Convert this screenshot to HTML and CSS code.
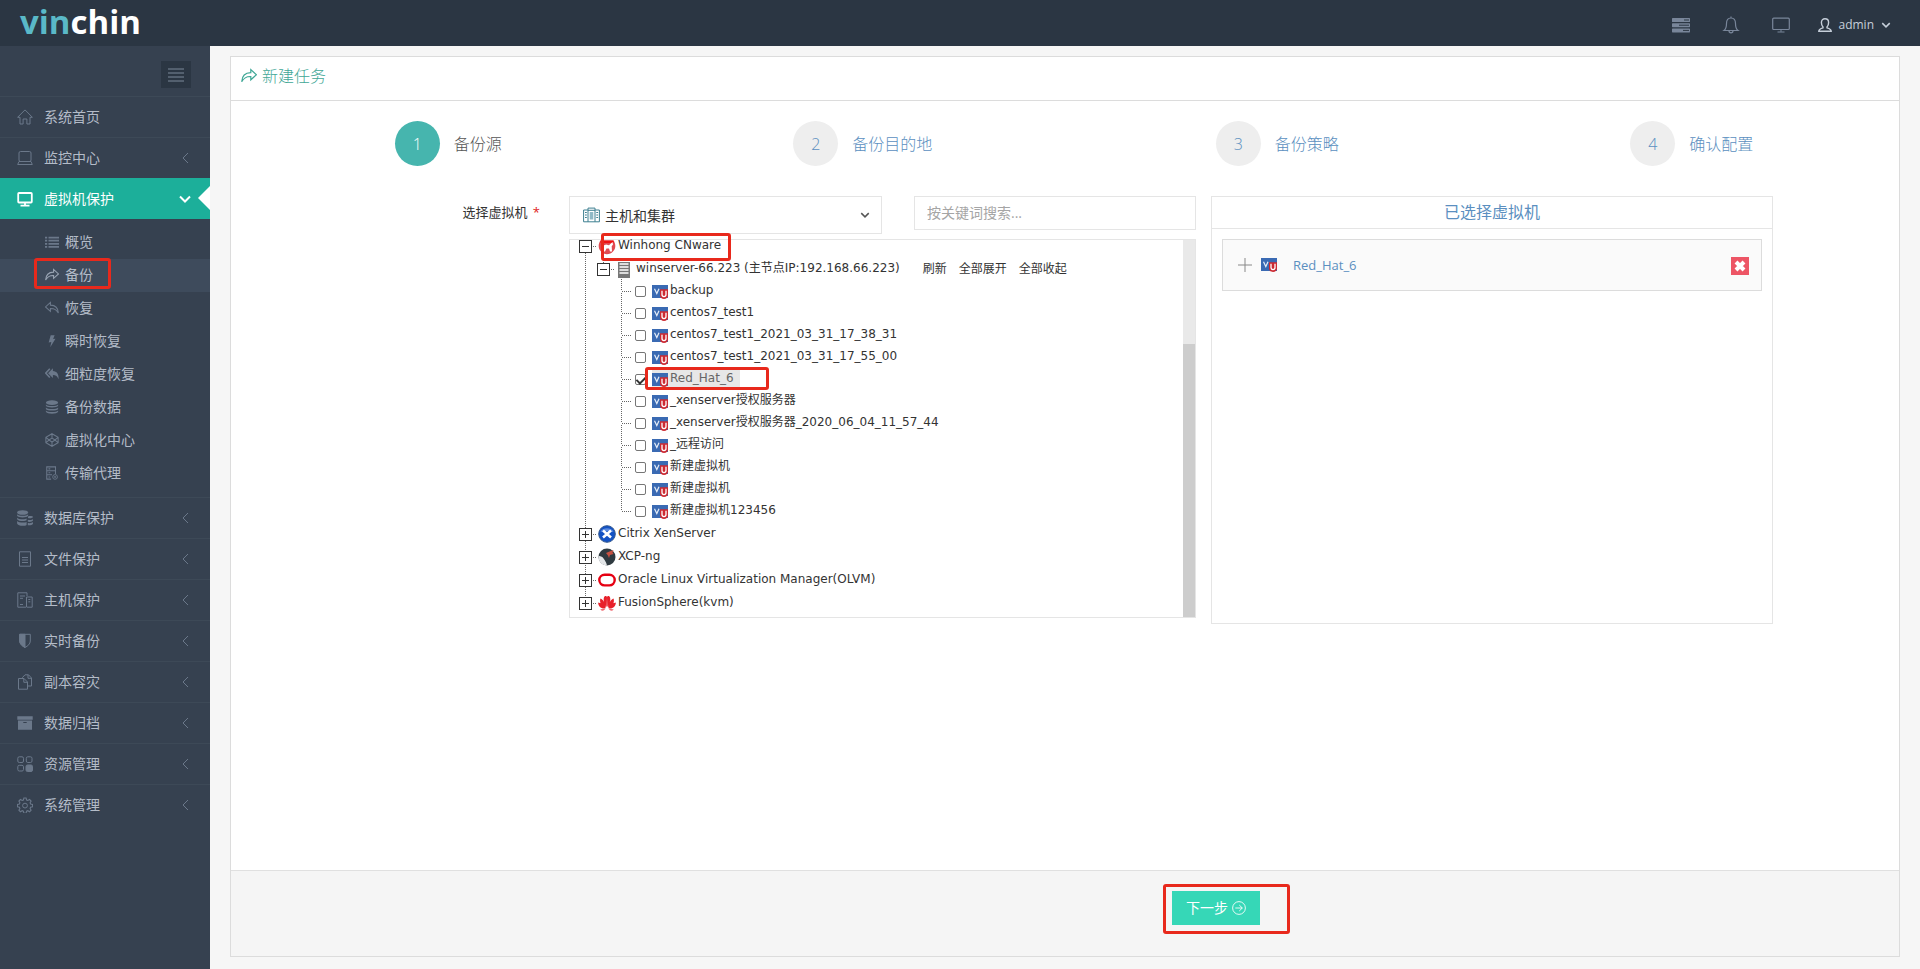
FILE: index.html
```html
<!DOCTYPE html>
<html lang="zh-CN">
<head>
<meta charset="utf-8">
<meta name="viewport" content="width=device-width, initial-scale=1">
<title>vinchin - 新建任务</title>
<link rel="stylesheet" href="styles.css">
</head>
<body>
<svg class="sprite" aria-hidden="true">
  <symbol id="i-home" viewBox="0 0 16 16"><path d="M.6 8.3 8 .9l7.4 7.4H13V15H9.900V10H6.100V15H3V8.300Z"/></symbol>
  <symbol id="i-laptop" viewBox="0 0 16 16"><rect x="2" y="1.500" width="12" height="10" rx="1.500"/><path d="M.7 14.500 2 11.500h12l1.300 3Z"/></symbol>
  <symbol id="i-desktop" viewBox="0 0 16 16"><rect x="1.200" y="2" width="13.600" height="9.500" rx=".8" stroke-width="1.800"/><path d="M8 12v2M3.500 14.600h9" stroke-width="1.800"/></symbol>
  <symbol id="i-left" viewBox="0 0 16 16"><path d="M11 3 6 8l5 5"/></symbol>
  <symbol id="i-down" viewBox="0 0 16 16"><path d="m3 5.500 5 5 5-5"/></symbol>
  <symbol id="i-list" viewBox="0 0 16 16"><path d="M0 3h2.500M4 3h12M0 6.500h2.500M4 6.500h12M0 10h2.500M4 10h12M0 13.500h2.500M4 13.500h12" stroke-width="2"/></symbol>
  <symbol id="i-share" viewBox="0 0 16 16"><path d="M.7 13.800C1 8 4 4.800 9.800 4.700V1.600l5.600 5.200-5.600 5V8.500C5.500 8.300 2.800 9.800.7 13.800Z" stroke-width="1.200"/></symbol>
  <symbol id="i-bolt" viewBox="0 0 16 16"><path d="M6.500 1.500H11L9.300 5.800 12 5.300 6 15l1.200-6-3 .8Z" fill="currentColor" stroke="none"/></symbol>
  <symbol id="i-replyall" viewBox="0 0 16 16"><path d="M9 1.500v3c4.500.2 7 3.500 6.500 9.500C14.300 10.800 12.500 9.300 9 9.200v3.300L3.500 7Z" fill="currentColor" stroke="none"/><path d="M5.500 2 .8 7l4.700 5" stroke-width="1.800"/></symbol>
  <symbol id="i-db" viewBox="0 0 16 16"><g fill="currentColor" stroke="none"><ellipse cx="8" cy="3" rx="7" ry="2.600"/><path d="M1 5c1.500 2.300 12.500 2.300 14 0v1.700c-1 2.400-13 2.400-14 0ZM1 8.500c1.500 2.300 12.500 2.300 14 0v1.700c-1 2.400-13 2.400-14 0ZM1 12c1.500 2.300 12.500 2.300 14 0v1.500c-1 2.900-13 2.900-14 0Z"/></g></symbol>
  <symbol id="i-hex" viewBox="0 0 16 16"><path d="M8 .8 15 5v6l-7 4.200L1 11V5ZM8 .8v5M8 10.300v4.900M1 5l3.800 3L1 11M15 5l-3.800 3L15 11M4.500 8 8 5.800 11.500 8 8 10.300Z" stroke-width="1.200"/></symbol>
  <symbol id="i-agent" viewBox="0 0 16 16"><path d="M7 15H2V1h10v8M2 5.500h10M2 10h6M4 3.300h2M4 7.800h2M4 12.500h2" stroke-width="1.200"/><circle cx="11.500" cy="12.500" r="2.700"/><circle cx="11.500" cy="12.500" r=".7"/></symbol>
  <symbol id="i-dbs" viewBox="0 0 16 16"><g fill="currentColor" stroke="none"><ellipse cx="5.600" cy="2.500" rx="5.500" ry="2.300"/><path d="M.1 4.300c1.500 2 9.500 2 11 0v1.500c-1 2.300-10 2.300-11 0ZM.1 7.700c1.500 1.900 8 2 9.500.9V10.300C8 11.500 1.200 11.300.1 9.200ZM.1 11c1.500 1.900 8 2 9.500.9v3C7 16.400.9 16 .1 13.500Z"/><path d="M11 6.500c2-.8 5-.3 5 .6s-3 1.600-5 1ZM10.800 9.700c2 .6 4.500.2 5.200-.7v1.600c-.7 1.200-3 1.500-5.200 1.200ZM10.800 13c2 .4 4.500 0 5.200-.9v1.600c-.7 1.500-3 1.800-5.200 1.600Z"/></g></symbol>
  <symbol id="i-file" viewBox="0 0 16 16"><path d="M2.500.8h11v14.400h-11ZM5 6.500h6M5 9h6M5 11.500h6"/></symbol>
  <symbol id="i-host" viewBox="0 0 16 16"><path d="M9 15.200H.8V.8H10V4M10 15.200h5.200V5H9.500v10.200M3 4h5M3 6.300h3M3 12.500h3M11.300 7.500h2M11.300 9.800h2"/></symbol>
  <symbol id="i-shield" viewBox="0 0 16 16"><path d="M2.700 1.300h10.600V8c0 3-2.500 5-5.300 6.500C5.200 13 2.700 11 2.700 8Z"/><path d="M2.700 1.300H8v13.200C5.200 13 2.700 11 2.700 8Z" fill="currentColor"/></symbol>
  <symbol id="i-copy" viewBox="0 0 16 16"><path d="M5.500 5V3.500L8 .8h3.500L14.500 4v8h-4M11 .8V4.300h3.500M1.500 15.200V4.500H7l3.500 3.500v7.200ZM6.800 4.500V8.300h3.700"/></symbol>
  <symbol id="i-archive" viewBox="0 0 16 16"><path d="M.3 1.200h15.400v3.600H.3ZM1 5.500h14v9.200H1Z" fill="currentColor" stroke="none"/><path d="M6.300 7.500h3.400" stroke="#364150"/></symbol>
  <symbol id="i-grid" viewBox="0 0 16 16"><rect x=".8" y=".8" width="5.700" height="5.700" rx="1.500"/><rect x="9.300" y=".8" width="5.700" height="5.700" rx="1.500"/><rect x=".8" y="9.300" width="5.700" height="5.700" rx="1.500"/><rect x="9" y="9" width="6.500" height="6.500" rx="1.500" fill="currentColor"/></symbol>
  <symbol id="i-gear" viewBox="0 0 16 16"><path d="M6.900 1h2.200l.5 2 1.200.5 1.800-1 1.500 1.500-1 1.800.5 1.200 2 .5v2.200l-2 .5-.5 1.200 1 1.800-1.500 1.500-1.800-1-1.200.5-.5 2H6.900l-.5-2-1.200-.5-1.800 1-1.500-1.500 1-1.800-.5-1.200-2-.5V7.500l2-.5.500-1.200-1-1.800 1.500-1.500 1.800 1 1.200-.5Z" stroke-width="1.100"/><circle cx="8" cy="8.600" r="2.400"/></symbol>
  <symbol id="i-servers" viewBox="0 0 18 16"><g fill="currentColor" stroke="none"><rect y="1" width="18" height="4" rx=".6"/><rect y="6.200" width="18" height="4" rx=".6"/><rect y="11.400" width="18" height="4" rx=".6"/></g><path d="M12 3h5M7 8.200h10M11 13.400h6" stroke="#2b3643"/></symbol>
  <symbol id="i-bell" viewBox="0 0 16 18"><path d="M1 14.500c2-1.500 2.500-3.500 2.500-7C3.500 4 5.500 2 8 2s4.500 2 4.500 5.500c0 3.500.5 5.500 2.500 7ZM8 2V.5M6 14.800c0 2.700 4 2.700 4 0" stroke-width="1.200"/></symbol>
  <symbol id="i-screen" viewBox="0 0 18 16"><rect x=".7" y="1.200" width="16.600" height="11.300" rx="1" stroke-width="1.200"/><path d="M9 12.500v2.300M5.500 15h7"/></symbol>
  <symbol id="i-user" viewBox="0 0 14 14"><path d="M.8 13.200c0-2 1.700-2.700 4.200-3.400V8.900C3.800 7.800 3.400 6.500 3.400 4.500 3.400 2 5 .8 7 .8s3.600 1.200 3.600 3.700c0 2-.4 3.300-1.600 4.400v.9c2.500.7 4.200 1.400 4.200 3.400Z" stroke-width="1.400"/></symbol>
  <symbol id="i-bars" viewBox="0 0 16 14"><path d="M0 1h16M0 5h16M0 9h16M0 13h16"/></symbol>
  <symbol id="i-city" viewBox="0 0 17 15"><path d="M5 14.300H.6V2.500H5M12 2.500h4.400v11.800H12M5 14.300V.6h7v13.700ZM5 2.800h7M2 5h1.800M2 7.500h1.800M2 10h1.800M13.300 5h1.800M13.300 7.500h1.800M13.300 10h1.800"/><rect x="6.700" y="4.500" width="3.600" height="7.500" fill="#8fb9c6" stroke="none"/></symbol>
  <symbol id="i-go" viewBox="0 0 16 16"><circle cx="8" cy="8" r="7.300"/><path d="M3.800 8h8M8.300 4.600 11.800 8l-3.500 3.400"/></symbol>
  <symbol id="i-x" viewBox="0 0 16 16"><path d="m4 4 8 8M12 4l-8 8" stroke-width="4"/></symbol>
  <symbol id="i-plus" viewBox="0 0 14 14"><path d="M7 0v14M0 7h14"/></symbol>
  <symbol id="i-vm" viewBox="0 0 16 14"><rect width="16" height="13" fill="#3a6ab3" stroke="none"/><path d="m2.500 3.800 2.300 4.700 2.200-4.700" stroke="#e4ecf7" stroke-width="1.200"/><path d="M8 4.200h8v6.300c0 2-1.800 3.500-4 3.500s-4-1.500-4-3.500Z" fill="#cc2a32" stroke="none"/><path d="M10 5.800v3.700c0 2.800 4 2.800 4 0V5.800" stroke="#fff" stroke-width="1.300"/></symbol>
  <symbol id="i-rack" viewBox="0 0 12 16"><rect x="0" y="0" width="12" height="16" fill="#777" stroke="none"/><path d="M1.500 2h9M1.500 5h9M1.500 8h9M1.500 11h9" stroke="#fff" stroke-width="1.600"/></symbol>
  <symbol id="i-winhong" viewBox="0 0 18 18"><path d="M2.500 3.500h13c2.500 3.500 2.500 8-.5 11-3 3.700-9 3.700-12 0-3-3-3-7.500-.5-11Z" fill="#e04a50" stroke="none"/><path d="M2.500 3.500h13V6h-13Z" fill="#ee1111" stroke="none"/><path d="m3.500 6.500 3 1.700L8 7.500l3 .8L14.500 5l.5 2.500-1.300 1.800.3 5.200h-2l-1-3H8.500l-1.500 3H5l.8-4.700Z" fill="#fff" stroke="none"/></symbol>
  <symbol id="i-citrix" viewBox="0 0 18 18"><circle cx="9" cy="9" r="8.300" fill="#1352c4" stroke="#33588f"/><path d="M2.500 7C4 2 14 2 15.500 7 12 5.500 6 5.500 2.500 7Z" fill="#5c8be0" stroke="none"/><path d="m5 5.500 8 7M13 5.500l-8 7" stroke="#fff" stroke-width="2.600"/></symbol>
  <symbol id="i-xcp" viewBox="0 0 18 18"><circle cx="9" cy="9" r="8.500" fill="#2f3a40" stroke="none"/><path d="M.6 8c3-.5 5 2 6 4 1 1.500 2 3.500 2.400 5.500C4 17.500 0 13.500.6 8Z" fill="#e3e6e8" stroke="none"/><path d="m8 5 3.500-1.500 4-1.500-1 2.500 1 1.500-3.500 1-1 3-1-2.500Z" fill="#c65142" stroke="none"/></symbol>
  <symbol id="i-oracle" viewBox="0 0 18 18"><rect x="1.300" y="3.800" width="15.400" height="10.600" rx="5.300" stroke="#e60012" stroke-width="2.400"/></symbol>
  <symbol id="i-huawei" viewBox="0 0 18 18"><g fill="#e8202a" stroke="none"><path d="M8.700 13C5.500 9 5 4 6.500 2.500c1.500-1 2.500 0 2.500 1ZM9.300 13c3.200-4 3.700-9 2.200-10.500-1.500-1-2.500 0-2.500 1ZM8 13.600C3.500 12.500 1 8 2.500 4.500c2.500 1 5 4.500 5.500 9.100ZM10 13.600c4.500-1.100 7-5.600 5.500-9.100-2.500 1-5 4.500-5.500 9.100ZM7.500 14.500C3 15.200 0 12 .2 8.500c3.300.3 5.800 3 7.300 6ZM10.500 14.500c4.500.7 7.500-2.500 7.300-6-3.300.3-5.800 3-7.300 6ZM7.300 15.200c-2 1.600-4 1.500-5 .2ZM10.700 15.200c2 1.600 4 1.500 5 .2Z"/></g></symbol>
</svg>

<header class="topbar">
  <a class="logo" href="#" aria-label="vinchin"><span class="logo-accent">vin</span>chin</a>
  <nav class="tools" aria-label="工具">
    <button class="tool" type="button" aria-label="任务"><svg class="icon icon-18"><use href="#i-servers"/></svg></button>
    <button class="tool" type="button" aria-label="通知"><svg class="icon icon-18"><use href="#i-bell"/></svg></button>
    <button class="tool" type="button" aria-label="屏幕"><svg class="icon icon-18"><use href="#i-screen"/></svg></button>
    <button class="user" type="button"><svg class="icon icon-14"><use href="#i-user"/></svg><span>admin</span><svg class="icon icon-caret"><use href="#i-down"/></svg></button>
  </nav>
</header>

<div class="shell">
  <aside class="sidebar">
    <div class="toggle-row"><button class="toggle" type="button" aria-label="折叠菜单"><svg class="icon icon-16"><use href="#i-bars"/></svg></button></div>
    <nav aria-label="主菜单">
      <ul class="menu">
        <li><a class="menu-link" href="#"><svg class="icon icon-16"><use href="#i-home"/></svg><span>系统首页</span></a></li>
        <li><a class="menu-link" href="#"><svg class="icon icon-16"><use href="#i-laptop"/></svg><span>监控中心</span><svg class="icon chevron"><use href="#i-left"/></svg></a></li>
        <li>
          <a class="menu-link active" href="#"><svg class="icon icon-16"><use href="#i-desktop"/></svg><span>虚拟机保护</span><svg class="icon chevron"><use href="#i-down"/></svg></a>
          <ul class="submenu">
            <li><a class="sub-link" href="#"><svg class="icon icon-14"><use href="#i-list"/></svg>概览</a></li>
            <li><a class="sub-link current" href="#"><svg class="icon icon-14"><use href="#i-share"/></svg>备份<i class="mark mark-menu"></i></a></li>
            <li><a class="sub-link" href="#"><svg class="icon icon-14 flip"><use href="#i-share"/></svg>恢复</a></li>
            <li><a class="sub-link" href="#"><svg class="icon icon-14"><use href="#i-bolt"/></svg>瞬时恢复</a></li>
            <li><a class="sub-link" href="#"><svg class="icon icon-14"><use href="#i-replyall"/></svg>细粒度恢复</a></li>
            <li><a class="sub-link" href="#"><svg class="icon icon-14"><use href="#i-db"/></svg>备份数据</a></li>
            <li><a class="sub-link" href="#"><svg class="icon icon-14"><use href="#i-hex"/></svg>虚拟化中心</a></li>
            <li><a class="sub-link" href="#"><svg class="icon icon-14"><use href="#i-agent"/></svg>传输代理</a></li>
          </ul>
        </li>
        <li><a class="menu-link" href="#"><svg class="icon icon-16"><use href="#i-dbs"/></svg><span>数据库保护</span><svg class="icon chevron"><use href="#i-left"/></svg></a></li>
        <li><a class="menu-link" href="#"><svg class="icon icon-16"><use href="#i-file"/></svg><span>文件保护</span><svg class="icon chevron"><use href="#i-left"/></svg></a></li>
        <li><a class="menu-link" href="#"><svg class="icon icon-16"><use href="#i-host"/></svg><span>主机保护</span><svg class="icon chevron"><use href="#i-left"/></svg></a></li>
        <li><a class="menu-link" href="#"><svg class="icon icon-16"><use href="#i-shield"/></svg><span>实时备份</span><svg class="icon chevron"><use href="#i-left"/></svg></a></li>
        <li><a class="menu-link" href="#"><svg class="icon icon-16"><use href="#i-copy"/></svg><span>副本容灾</span><svg class="icon chevron"><use href="#i-left"/></svg></a></li>
        <li><a class="menu-link" href="#"><svg class="icon icon-16"><use href="#i-archive"/></svg><span>数据归档</span><svg class="icon chevron"><use href="#i-left"/></svg></a></li>
        <li><a class="menu-link" href="#"><svg class="icon icon-16"><use href="#i-grid"/></svg><span>资源管理</span><svg class="icon chevron"><use href="#i-left"/></svg></a></li>
        <li><a class="menu-link" href="#"><svg class="icon icon-16"><use href="#i-gear"/></svg><span>系统管理</span><svg class="icon chevron"><use href="#i-left"/></svg></a></li>
      </ul>
    </nav>
  </aside>

  <main class="main">
    <form class="panel">
      <h1 class="panel-title"><svg class="icon icon-16"><use href="#i-share"/></svg>新建任务</h1>
      <div class="panel-body">
        <ol class="steps">
          <li class="step current"><span class="num">1</span>备份源</li>
          <li class="step"><span class="num">2</span>备份目的地</li>
          <li class="step"><span class="num">3</span>备份策略</li>
          <li class="step"><span class="num">4</span>确认配置</li>
        </ol>
        <div class="source">
          <label class="field-label" for="view">选择虚拟机 <span class="required">*</span></label>
          <div class="picker">
            <div class="filters">
              <div class="select-box">
                <svg class="icon icon-city"><use href="#i-city"/></svg>
                <select id="view"><option>主机和集群</option></select>
                <svg class="icon icon-caret"><use href="#i-down"/></svg>
              </div>
              <input class="search" type="text" placeholder="按关键词搜索..." aria-label="按关键词搜索">
            </div>
            <div class="tree-frame">
              <div class="tree-view">
                <ul class="tree">
                  <li>
                    <div class="row root"><button class="twig open" type="button" aria-label="收起"></button><i class="dots"></i><svg class="icon icon-18"><use href="#i-winhong"/></svg><span>Winhong CNware</span></div>
                    <ul class="hosts">
                      <li>
                        <div class="row host"><button class="twig open" type="button" aria-label="收起"></button><i class="dots"></i><svg class="icon icon-rack"><use href="#i-rack"/></svg><span>winserver-66.223 (主节点IP:192.168.66.223)</span><span class="actions"><a href="#">刷新</a><a href="#">全部展开</a><a href="#">全部收起</a></span></div>
                        <ul class="vms">
                          <li class="row vm"><i class="dots"></i><input type="checkbox" id="vm1"><label for="vm1"><svg class="icon icon-vm"><use href="#i-vm"/></svg>backup</label></li>
                          <li class="row vm"><i class="dots"></i><input type="checkbox" id="vm2"><label for="vm2"><svg class="icon icon-vm"><use href="#i-vm"/></svg>centos7_test1</label></li>
                          <li class="row vm"><i class="dots"></i><input type="checkbox" id="vm3"><label for="vm3"><svg class="icon icon-vm"><use href="#i-vm"/></svg>centos7_test1_2021_03_31_17_38_31</label></li>
                          <li class="row vm"><i class="dots"></i><input type="checkbox" id="vm4"><label for="vm4"><svg class="icon icon-vm"><use href="#i-vm"/></svg>centos7_test1_2021_03_31_17_55_00</label></li>
                          <li class="row vm"><i class="dots"></i><input type="checkbox" id="vm5" checked><label class="picked" for="vm5"><svg class="icon icon-vm"><use href="#i-vm"/></svg>Red_Hat_6</label><i class="mark mark-vm"></i></li>
                          <li class="row vm"><i class="dots"></i><input type="checkbox" id="vm6"><label for="vm6"><svg class="icon icon-vm"><use href="#i-vm"/></svg>_xenserver授权服务器</label></li>
                          <li class="row vm"><i class="dots"></i><input type="checkbox" id="vm7"><label for="vm7"><svg class="icon icon-vm"><use href="#i-vm"/></svg>_xenserver授权服务器_2020_06_04_11_57_44</label></li>
                          <li class="row vm"><i class="dots"></i><input type="checkbox" id="vm8"><label for="vm8"><svg class="icon icon-vm"><use href="#i-vm"/></svg>_远程访问</label></li>
                          <li class="row vm"><i class="dots"></i><input type="checkbox" id="vm9"><label for="vm9"><svg class="icon icon-vm"><use href="#i-vm"/></svg>新建虚拟机</label></li>
                          <li class="row vm"><i class="dots"></i><input type="checkbox" id="vm10"><label for="vm10"><svg class="icon icon-vm"><use href="#i-vm"/></svg>新建虚拟机</label></li>
                          <li class="row vm"><i class="dots"></i><input type="checkbox" id="vm11"><label for="vm11"><svg class="icon icon-vm"><use href="#i-vm"/></svg>新建虚拟机123456</label></li>
                        </ul>
                      </li>
                    </ul>
                  </li>
                  <li class="row root"><button class="twig" type="button" aria-label="展开"></button><i class="dots"></i><svg class="icon icon-18"><use href="#i-citrix"/></svg><span>Citrix XenServer</span></li>
                  <li class="row root"><button class="twig" type="button" aria-label="展开"></button><i class="dots"></i><svg class="icon icon-18"><use href="#i-xcp"/></svg><span>XCP-ng</span></li>
                  <li class="row root"><button class="twig" type="button" aria-label="展开"></button><i class="dots"></i><svg class="icon icon-18"><use href="#i-oracle"/></svg><span>Oracle Linux Virtualization Manager(OLVM)</span></li>
                  <li class="row root"><button class="twig" type="button" aria-label="展开"></button><i class="dots"></i><svg class="icon icon-18"><use href="#i-huawei"/></svg><span>FusionSphere(kvm)</span></li>
                </ul>
                <div class="scrollbar"><div class="thumb"></div></div>
              </div>
              <i class="mark mark-root"></i>
            </div>
          </div>
          <section class="selected">
            <h2 class="selected-title">已选择虚拟机</h2>
            <div class="selected-item">
              <svg class="icon icon-14 plus"><use href="#i-plus"/></svg>
              <svg class="icon icon-vm"><use href="#i-vm"/></svg>
              <a class="selected-name" href="#">Red_Hat_6</a>
              <button class="remove" type="button" aria-label="移除"><svg class="icon icon-16"><use href="#i-x"/></svg></button>
            </div>
          </section>
        </div>
      </div>
      <footer class="panel-footer">
        <div class="next-wrap"><button class="next" type="button">下一步<svg class="icon icon-14"><use href="#i-go"/></svg></button><i class="mark mark-next"></i></div>
      </footer>
    </form>
  </main>
</div>
</body>
</html>
```

FILE: styles.css
```css
* { box-sizing: border-box; }

body {
  margin: 0;
  min-height: 100vh;
  display: flex;
  flex-direction: column;
  background: #f6f6f6;
  color: #333;
  font: 14px/20px "Open Sans", "Noto Sans CJK SC", sans-serif;
}

ul, ol { margin: 0; padding: 0; list-style: none; }
a { color: inherit; text-decoration: none; }
button, input, select { font: inherit; color: inherit; }
button { padding: 0; border: 0; background: none; cursor: pointer; }

.sprite { position: absolute; width: 0; height: 0; }
.icon { flex: none; fill: none; stroke: currentColor; stroke-width: 1; }
.icon-14 { width: 14px; height: 14px; }
.icon-16 { width: 16px; height: 16px; }
.icon-18 { width: 18px; height: 18px; }
.icon-caret { width: 12px; height: 12px; stroke-width: 2; }
.icon-city { width: 17px; height: 16px; color: #3d7f90; }
.icon-rack { width: 12px; height: 16px; }
.icon-vm { width: 16px; height: 14px; }
.flip { transform: scaleX(-1); }

/* Top bar */
.topbar {
  height: 46px;
  display: flex;
  justify-content: space-between;
  align-items: center;
  padding: 0 28px 0 20px;
  background: #2b3643;
}
.logo { color: #fff; font-size: 33px; font-weight: 700; line-height: 40px; padding-bottom: 2px; }
.logo-accent { color: #5ab9c8; }
.tools { display: flex; align-items: center; padding-top: 3px; }
.tool { width: 50px; height: 30px; display: flex; justify-content: center; align-items: center; color: #79869a; }
.user { display: flex; align-items: center; gap: 6px; margin-left: 12px; color: #c6cfda; font-size: 12px; }

/* Sidebar */
.shell { flex: 1; display: flex; }
.sidebar { flex: none; width: 210px; background: #364150; color: #b4bcc8; }
.toggle-row { height: 50px; display: flex; justify-content: flex-end; align-items: center; padding: 7px 19px 0 0; }
.toggle { width: 30px; height: 27px; display: flex; justify-content: center; align-items: center; background: #2b3643; color: #7c899b; }
.menu-link {
  height: 41px;
  display: flex;
  align-items: center;
  gap: 11px;
  padding: 0 17px 1px;
  border-top: 1px solid #3d4957;
}
.menu-link .icon { color: #6b788a; }
.menu-link .chevron { width: 16px; height: 16px; margin-left: auto; }
.menu-link.active { position: relative; background: #1caf9a; border-color: #1caf9a; color: #fff; }
.menu-link.active .icon { color: #fff; }
.menu-link.active .chevron { stroke-width: 2; }
.menu-link.active::after {
  content: "";
  position: absolute;
  right: 0;
  top: 7px;
  border: 12px solid transparent;
  border-left-width: 0;
  border-right-color: #fff;
}
.submenu { padding: 7px 0; }
.sub-link { position: relative; height: 33px; display: flex; align-items: center; gap: 6px; padding: 0 0 2px 45px; }
.sub-link .icon { color: #6b788a; }
.sub-link.current { background: #3e4b5c; }
.sub-link.current .icon { color: #98a4b3; }

/* Highlight frames */
.mark { position: absolute; border: 3px solid #e8291c; border-radius: 3px; pointer-events: none; }
.mark-menu { left: 34px; top: -1px; width: 77px; height: 31px; }
.mark-root { left: 31px; top: -7px; width: 130px; height: 28px; }
.mark-vm { left: 24px; top: 0; width: 124px; height: 23px; }
.mark-next { left: -9px; top: -7px; width: 127px; height: 50px; }

/* Task panel */
.main { flex: 1; display: flex; padding: 10px 20px 12px; }
.panel { flex: 1; display: flex; flex-direction: column; background: #fff; border: 1px solid #dcdcdc; }
.panel-title {
  height: 44px;
  margin: 0;
  padding: 0 10px 6px;
  display: flex;
  align-items: center;
  gap: 5px;
  border-bottom: 1px solid #dcdcdc;
  color: #3fa796;
  font-size: 16px;
  font-weight: 300;
}
.panel-body { flex: 1; padding: 20px 0 30px; }

.steps { display: grid; grid-template-columns: repeat(4, 1fr); padding-left: 10px; font-size: 16px; font-weight: 300; }
.step { display: flex; justify-content: center; align-items: center; gap: 14px; color: #5b8fc0; }
.num { width: 45px; height: 45px; border-radius: 50%; display: flex; justify-content: center; align-items: center; background: #eee; }
.step.current { color: #555; }
.step.current .num { background: #46b5ae; color: #fff; }

.source { display: grid; grid-template-columns: 323fr 627fr 562fr 111fr; gap: 15px; margin-top: 30px; }
.field-label { padding: 6px 14px 0 0; text-align: right; font-size: 13px; }
.required { margin-left: 2px; color: #e02222; }

.picker { display: flex; flex-direction: column; gap: 5px; }
.filters { display: grid; grid-template-columns: 313fr 282fr; align-items: start; gap: 32px; }
.select-box { height: 38px; display: flex; align-items: center; gap: 1px; padding: 0 10px 0 13px; border: 1px solid #e5e5e5; }
.select-box .icon-caret { stroke-width: 2; color: #555; }
.select-box select { flex: 1; min-width: 0; height: 36px; padding: 2px 4px 0; border: 0; background: none; appearance: none; }
.search { width: 100%; height: 34px; padding: 0 12px 2px; border: 1px solid #e5e5e5; border-radius: 0; background: #fff; }
.search::placeholder { color: #a5a5a5; }

/* Virtual machine tree */
.tree-frame { position: relative; border: 1px solid #e5e5e5; font: 12px/18px "DejaVu Sans", "Noto Sans CJK SC", sans-serif; }
.tree-view { display: flex; min-height: 377px; }
.scrollbar { width: 12px; display: flex; align-items: flex-end; background: #e9e9e9; }
.thumb { width: 100%; height: 273px; background: #cdcdcd; }
.tree {
  flex: 1;
  height: max-content;
  margin-top: -7px;
  padding-left: 9px;
  background: repeating-linear-gradient(#666 0 1px, #fff 1px 2px) 15px 8px / 1px calc(100% - 16px) no-repeat;
}
.row { position: relative; display: flex; align-items: center; height: 23px; white-space: nowrap; }
.row.root .icon { margin: 2px 2px 0 1px; }
.hosts { padding-left: 18px; background: repeating-linear-gradient(#666 0 1px, #fff 1px 2px) 24px 0 / 1px 8px no-repeat; }
.row.host .icon { margin: 4px 6px 0 3px; }
.row.vm { height: 22px; }
.vms {
  margin-left: 24px;
  background: repeating-linear-gradient(#666 0 1px, #fff 1px 2px) 0 0 / 1px calc(100% - 10px) no-repeat;
}
.twig {
  width: 13px;
  height: 13px;
  margin-top: 3px;
  border: 1px solid #333;
  background:
    linear-gradient(#333, #333) 50% 50% / 7px 1px no-repeat,
    linear-gradient(#333, #333) 50% 50% / 1px 7px no-repeat,
    #fff;
}
.twig.open { background: linear-gradient(#333, #333) 50% 50% / 7px 1px no-repeat, #fff; }
.dots { width: 5px; height: 1px; margin-top: 3px; background: repeating-linear-gradient(90deg, #fff 0 1px, #666 1px 2px); }
.vm .dots { width: 11px; margin-right: 3px; }
.vm input {
  position: relative;
  width: 11px;
  height: 11px;
  margin: 3px 6px 0 0;
  appearance: none;
  border: 1px solid #767676;
  border-radius: 2px;
  background: #fff;
}
.vm input:checked::after {
  content: "";
  position: absolute;
  left: 2px;
  top: 0;
  width: 4px;
  height: 7px;
  border: solid #333;
  border-width: 0 2px 2px 0;
  transform: rotate(45deg);
}
.vm label { display: flex; align-items: center; gap: 2px; height: 17px; padding-right: 6px; }
.vm label .icon { margin-top: 3px; }
.vm .picked { background: #e7e7e7; color: #666; }
.actions { display: flex; gap: 12px; margin: 2px 0 0 23px; }

/* Selected machines */
.selected { border: 1px solid #e5e5e5; min-height: 428px; }
.selected-title { margin: 0; padding: 4px 0 5px; border-bottom: 1px solid #e5e5e5; text-align: center; color: #5b8fc0; font-size: 16px; font-weight: 400; line-height: 22px; }
.selected-item {
  height: 52px;
  display: flex;
  align-items: center;
  margin: 10px;
  padding: 0 12px 0 15px;
  border: 1px solid #dcdcdc;
  background: #fafafa;
}
.plus { margin-right: 9px; color: #888; }
.selected-name { margin-right: auto; margin-left: 16px; color: #5b8fc0; font-size: 13px; }
.remove { width: 18px; height: 18px; display: flex; justify-content: center; align-items: center; margin-top: 2px; background: #ed5565; color: #fff; }

.panel-footer {
  display: grid;
  grid-template-columns: 941fr 727fr;
  padding: 20px 0 31px;
  border-top: 1px solid #e0e0e0;
  background: #f5f5f5;
}
.next-wrap { grid-column: 2; justify-self: start; position: relative; }
.next { height: 34px; display: flex; align-items: center; gap: 4px; padding: 0 14px; background: #36d7b7; color: #fff; }
```
